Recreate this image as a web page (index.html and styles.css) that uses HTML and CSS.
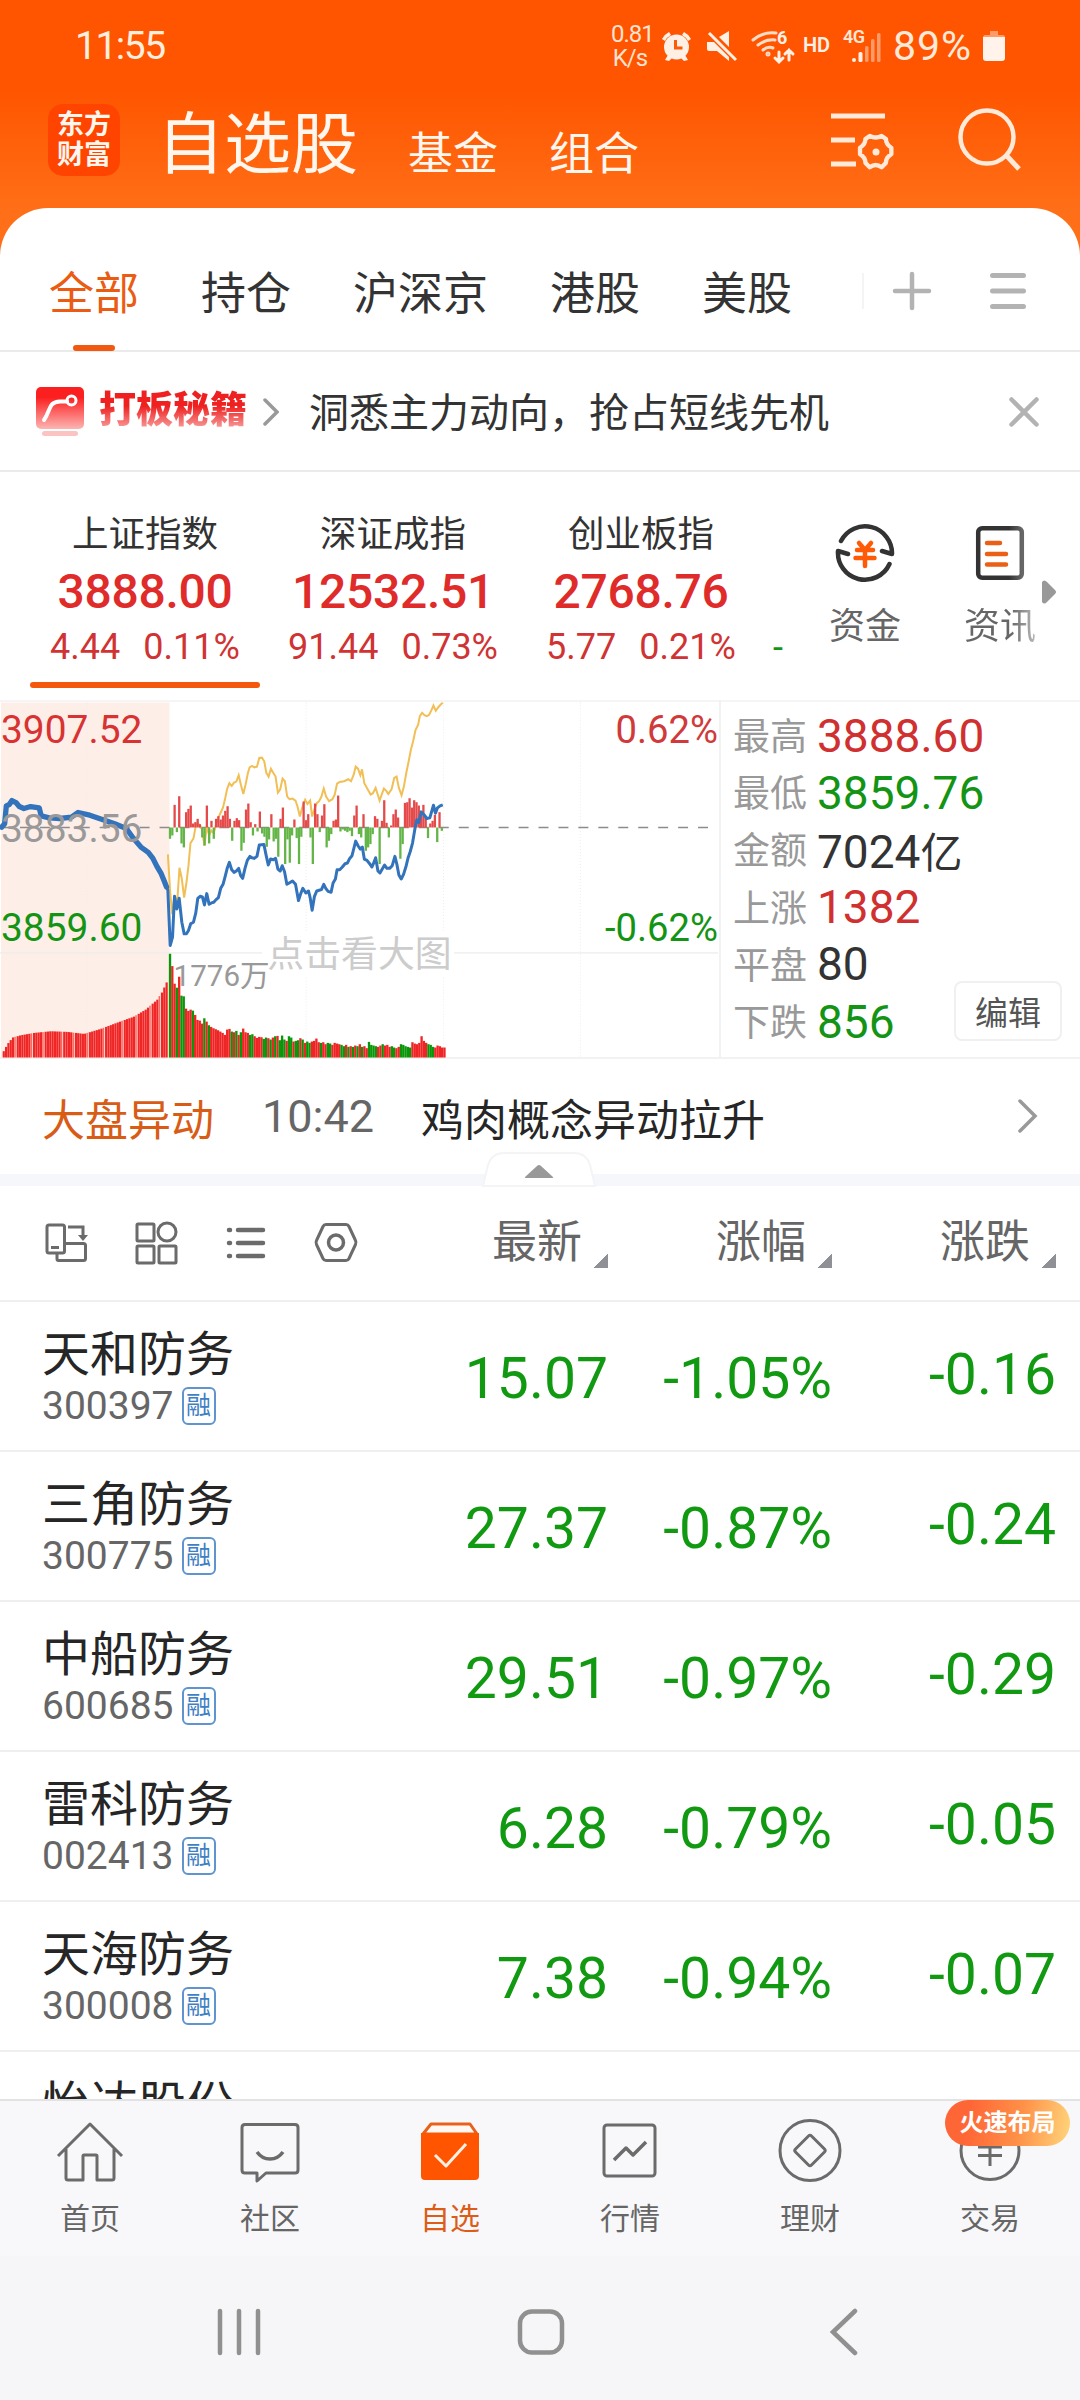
FILE: index.html
```html
<!DOCTYPE html>
<html lang="zh-CN">
<head>
<meta charset="utf-8">
<title>自选股</title>
<link rel="stylesheet" href="styles.css">
</head>
<body>
<div class="phone">
  <header class="top">
    <div class="status">
      <span class="clock">11:55</span>
      <span class="speed">0.81<br>K/s</span>
      <svg class="status-icons" width="232" height="40" viewBox="660 26 232 40">
        <g fill="#fff0e6">
          <circle cx="676.500" cy="47" r="12.500"/>
          <path d="M662 39a16 16 0 0 1 7-7l2 3a14 14 0 0 0-6 6zM691 39a16 16 0 0 0-7-7l-2 3a14 14 0 0 1 6 6zM665 60l3-5 4 3-3 3zM688 60l-3-5-4 3 3 3z"/>
          <path d="M675.500 40v8h7" fill="none" stroke="#ff5a05" stroke-width="3"/>
          <path d="M707 42h7l15 15v4l-12-10h-8q-2 0-2-2zM719 37l10-6v16z"/>
          <path d="M709 33l27 27" stroke="#fff0e6" stroke-width="3"/>
        </g>
        <g fill="none" stroke="#ffdcc6" stroke-width="3" stroke-linecap="round">
          <path d="M753 40q11-9 23-7M758 45q8-6 17-5M763 50q5-4 10-2"/>
          <circle cx="768" cy="54" r="1"/>
          <path d="M779 52v10M775 58l4 4 4-4M789 60v-10M785 54l4-4 4 4" stroke="#fff0e6"/>
        </g>
        <text x="777" y="44" font-size="18" font-weight="700" fill="#fff0e6">6</text>
        <text x="803" y="52" font-size="20" font-weight="600" fill="#fff0e6" textLength="27">HD</text>
        <text x="843" y="43" font-size="18" font-weight="600" fill="#ffe6d6" textLength="22">4G</text>
        <g fill="#fff0e6"><circle cx="854" cy="60" r="2"/><rect x="858.500" y="52" width="4" height="10" rx="1.500"/></g>
        <g fill="#ff9b68"><rect x="865" y="46" width="3.500" height="16" rx="1.500"/><rect x="871" y="39" width="3.500" height="23" rx="1.500"/><rect x="877" y="33" width="3.500" height="29" rx="1.500"/></g>
      </svg>
      <span class="percent">89%</span>
      <svg class="battery" width="22" height="32" viewBox="0 0 22 32"><path d="M7 1h8v4h5q2 0 2 3H0q0-3 2-3h5z" fill="#ff9b68"/><path d="M0 7h22v21q0 3-3 3H3q-3 0-3-3z" fill="#fff3ec"/></svg>
    </div>
    <div class="brand">
      <div class="logo"><span>东方</span><span>财富</span></div>
      <h1 class="title">自选股</h1>
      <span class="sub">基金</span>
      <span class="sub sub-two">组合</span>
      <svg class="manage" width="58" height="60" viewBox="0 0 58 60" fill="none" stroke="#ffe9d9" stroke-width="5">
        <path d="M0 8h54M0 32h24M0 56h25"/>
        <path stroke-linejoin="round" stroke-width="4" d="M40.500 29.500q5.500 3 11 0l4 3q0 5 5 8v6q-5 3-5 8l-4 4q-5.500-4-11 0l-4-4q0-5-5-8v-6q5-3 5-8z" transform="translate(-5 -4) scale(1.080)"/>
        <circle cx="45" cy="44" r="3.500" fill="#ffe9d9" stroke="none"/>
      </svg>
      <svg class="search" width="64" height="66" viewBox="0 0 64 66" fill="none" stroke="#ffe9d9" stroke-width="4.500"><circle cx="29" cy="30" r="26.500"/><path d="M48 48l13 14" stroke-width="5"/></svg>
    </div>
  </header>

  <main class="sheet">
    <nav class="groups">
      <span class="group active">全部</span><span class="group">持仓</span><span class="group">沪深京</span><span class="group">港股</span><span class="group">美股</span>
      <i class="sep"></i>
      <svg class="plus" width="40" height="40" viewBox="0 0 40 40" stroke="#b3b3b3" stroke-width="4.500" stroke-linecap="round"><path d="M3 20h34M20 3v34"/></svg>
      <svg class="menu" width="36" height="40" viewBox="0 0 36 40" stroke="#b3b3b3" stroke-width="5" stroke-linecap="round"><path d="M2.500 4.500h31M2.500 20h31M2.500 35.500h31"/></svg>
    </nav>

    <section class="promo">
      <svg width="48" height="50" viewBox="0 0 48 50">
        <defs><linearGradient id="red" x1="0" y1="0" x2="0" y2="1"><stop offset=".25" stop-color="#fb201f"/><stop offset="1" stop-color="#fcb5b3"/></linearGradient></defs>
        <rect width="48" height="42" rx="5" fill="url(#red)"/>
        <path d="M8 33C15 23 12 15 24 14.500h7" fill="none" stroke="#fff" stroke-width="4" stroke-linecap="round"/><circle cx="35.500" cy="13.500" r="4.500" fill="none" stroke="#fff" stroke-width="3"/>
        <rect x="6" y="44" width="36" height="5" rx="2.500" fill="#fbc3c1"/>
      </svg>
      <b class="promo-tag">打板秘籍</b>
      <svg class="promo-arrow" width="16" height="28" viewBox="0 0 16 28" fill="none" stroke="#999" stroke-width="3.500" stroke-linecap="round"><path d="M2 2l12 12L2 26"/></svg>
      <span class="promo-text">洞悉主力动向，抢占短线先机</span>
      <svg class="close" width="30" height="30" viewBox="0 0 30 30" stroke="#b3b3b3" stroke-width="4.500" stroke-linecap="round"><path d="M2.500 2.500l25 25M27.500 2.500l-25 25"/></svg>
    </section>

    <section class="indices">
      <div class="index current"><span class="iname">上证指数</span><b class="ivalue">3888.00</b><span class="ichange"><i>4.44</i><i>0.11%</i></span></div>
      <div class="index"><span class="iname">深证成指</span><b class="ivalue">12532.51</b><span class="ichange"><i>91.44</i><i>0.73%</i></span></div>
      <div class="index"><span class="iname">创业板指</span><b class="ivalue">2768.76</b><span class="ichange"><i>5.77</i><i>0.21%</i></span></div>
      <span class="next">-</span>
      <div class="tool">
        <svg width="60" height="60" viewBox="0 0 60 60" fill="none" stroke="#333" stroke-width="4.500" stroke-linecap="round" stroke-linejoin="round">
          <path d="M6 18A27 27 0 0 1 57 31L47 28M54.500 41A27 27 0 0 1 3 28L13 31"/>
          <path d="M24 20l6 7 6-7M22 27h16M20.500 35h19M30 27v16" stroke="#ff5a05"/>
        </svg>
        <span>资金</span>
      </div>
      <div class="tool tool-news">
        <svg width="60" height="60" viewBox="0 0 60 60" fill="none" stroke-linecap="round">
          <defs><linearGradient id="fade" x1="0" x2="1" y1="0" y2="0"><stop offset=".7" stop-color="#333"/><stop offset="1" stop-color="#666"/></linearGradient></defs>
          <rect x="8.200" y="5.200" width="43.600" height="49.600" rx="4" stroke="url(#fade)" stroke-width="4.500"/>
          <path d="M17 20h13M17 31h19M17 41.500h19" stroke="#ec5f16" stroke-width="4.500"/>
        </svg>
        <span>资讯</span>
      </div>
      <svg class="more" width="16" height="26" viewBox="0 0 16 26"><path d="M1 3q2-3 5 0l8 8q2 2 0 4l-8 8q-3 3-5 0z" fill="#999"/></svg>
    </section>

    <section class="market">
      <svg class="chart" width="721" height="359" viewBox="0 33 2163 1077" id="chart">
        <rect x="3" y="39" width="507" height="1068" fill="#fdeee8"/>
        <g stroke="#ededed" stroke-width="3" stroke-dasharray="3 6"><path d="M261 39V1107M921 39V1107M1334 39V1107M1746 39V1107"/></g>
        <path d="M0 792H2160" stroke="#ececec" stroke-width="4"/>
        <path d="M0 415H2136" stroke="#8c8c8c" stroke-width="5" stroke-dasharray="30 30"/>
        <g id="volume"></g>
        <path d="M505 496L512 610 518 676 525 620 533 640 540 536 547 570 554 626 561 580 567 530 573 462 582 448 589 410 595 402 602 410 608 422 615 470 622 412 629 438 636 424 643 432 650 406 657 385 664 370 671 355 678 325 683 300 690 282 697 290 704 280 711 277 718 258 725 288 732 314 739 285 746 250 751 234 758 230 765 234 773 232 780 206 788 205 795 216 801 250 808 262 815 238 822 250 829 262 836 310 843 300 850 268 857 276 864 322 871 330 880 328 889 334 895 352 902 382 909 356 918 332 925 344 933 334 939 382 946 360 953 342 960 336 967 322 974 298 981 322 990 336 1000 330 1007 316 1014 283 1022 278 1035 276 1048 270 1056 276 1064 256 1070 232 1077 238 1084 258 1089 240 1096 282 1106 300 1115 316 1122 312 1130 296 1137 318 1142 334 1149 314 1155 298 1162 305 1168 314 1178 300 1186 266 1193 262 1200 296 1208 318 1215 292 1222 252 1229 218 1236 182 1243 155 1250 122 1258 106 1263 80 1270 70 1277 77 1284 80 1291 76 1298 62 1304 48 1311 64 1318 54 1325 46 1332 40" fill="none" stroke="#f1bf55" stroke-width="6"/>
        <g id="flow"></g>
        <path d="M5 414L14 404 19 350 28 346 36 334 48 340 58 352 72 358 92 352 118 356 124 380 148 386 180 388 215 384 235 370 270 378 310 392 345 404 380 418 400 446 424 474 446 490 460 508 472 532 484 552 494 576 501 594" fill="none" stroke="#3273bc" stroke-width="16" stroke-linejoin="round" stroke-linecap="round"/>
        <path d="M501 594L505 604 512 770 519 745 525 622 532 660 539 628 547 700 554 735 561 735 567 725 574 704 582 700 589 672 595 628 602 622 609 624 615 648 622 614 629 646 636 642 643 640 650 632 657 626 664 598 671 586 678 560 684 536 690 520 697 542 704 550 711 546 718 538 724 560 730 568 737 538 744 514 752 502 758 506 765 508 773 502 780 468 787 467 794 466 800 496 807 528 814 510 822 512 829 508 836 540 843 546 849 530 856 548 863 586 870 582 880 576 889 586 898 635 904 616 911 598 920 612 928 606 933 626 939 664 946 622 953 606 960 604 967 602 974 586 980 598 987 607 996 610 1002 582 1009 570 1014 542 1022 542 1030 534 1038 524 1045 522 1052 508 1059 500 1065 476 1070 456 1077 470 1084 480 1090 474 1096 510 1104 514 1112 524 1119 534 1125 520 1130 506 1137 546 1143 552 1150 540 1157 528 1164 538 1172 538 1180 530 1188 502 1194 526 1200 558 1207 570 1214 556 1222 530 1228 505 1234 488 1241 462 1248 420 1254 392 1260 400 1267 368 1275 376 1284 388 1293 386 1300 362 1304 348 1310 372 1316 356 1324 350 1332 347" fill="none" stroke="#3273bc" stroke-width="9" stroke-linejoin="round"/>
        <rect x="788" y="730" width="578" height="134" fill="#fff"/>
        <g font-size="117"><text x="3" y="161" fill="#d93232">3907.52</text><text x="3" y="459" fill="#999">3883.56</text><text x="3" y="758" fill="#149414">3859.60</text></g>
        <g font-size="115" text-anchor="end"><text x="2160" y="161" fill="#d03a3a">0.62%</text><text x="2160" y="758" fill="#149414">-0.62%</text></g>
        <text x="522" y="891" font-size="89" fill="#999">1776万</text>
        <text x="804" y="834" font-size="111" fill="#cccccc">点击看大图</text>
      </svg>
      <dl class="stats">
        <div><dt>最高</dt><dd class="up">3888.60</dd></div>
        <div><dt>最低</dt><dd class="down">3859.76</dd></div>
        <div><dt>金额</dt><dd>7024<small>亿</small></dd></div>
        <div><dt>上涨</dt><dd class="up">1382</dd></div>
        <div><dt>平盘</dt><dd>80</dd></div>
        <div><dt>下跌</dt><dd class="down">856</dd></div>
        <button class="edit">编辑</button>
      </dl>
    </section>

    <section class="alert">
      <span class="alert-tag">大盘异动</span><span class="alert-time">10:42</span><span class="alert-text">鸡肉概念异动拉升</span>
      <svg width="20" height="34" viewBox="0 0 20 34" fill="none" stroke="#999" stroke-width="3.500" stroke-linecap="round"><path d="M2 2l15 15L2 32"/></svg>
      <svg class="fold" width="114" height="36" viewBox="0 0 114 36"><path d="M1 34l4-17Q8 1 22 1h70q14 0 17 16l4 17z" fill="#fff" stroke="#f3f4f6" stroke-width="2"/><path d="M43 25l12-11q2-2 4 0l12 11q1 1-1 1H44q-2 0-1-1z" fill="#999"/></svg>
    </section>

    <section class="head">
      <svg class="views" width="320" height="46" viewBox="42 1220 320 46" fill="none" stroke="#6b6b6b" stroke-width="3">
        <rect x="47" y="1225" width="17.500" height="28" rx="2"/><path d="M51 1247.500h8M68 1227h15v10M57 1253v6q0 1.500 1.500 1.500h25q2 0 2-2v-13q0-2-2-2H65"/><path d="M78 1235l5 6 5-6z" fill="#6b6b6b" stroke="none"/>
        <rect x="137" y="1224" width="17" height="17" rx="1"/><circle cx="167" cy="1232" r="9"/><rect x="137" y="1246" width="17" height="17" rx="1"/><rect x="159" y="1246" width="17" height="17" rx="1"/>
        <path d="M229 1230h1M229 1243h1M229 1256h1M238 1230h25M238 1243h25M238 1256h25" stroke-width="4.500" stroke-linecap="round"/>
        <path d="M326 1224.500h20q2 0 3 2l6.500 14q1 2 0 4l-6.500 14q-1 2-3 2h-20q-2 0-3-2l-6.500-14q-1-2 0-4l6.500-14q1-2 3-2z"/><circle cx="336" cy="1242.500" r="7.500" stroke-width="3.500"/>
      </svg>
      <span class="col">最新<i></i></span><span class="col">涨幅<i></i></span><span class="col">涨跌<i></i></span>
    </section>

    <section class="rows">
      <div class="row"><div class="stock"><b>天和防务</b><span>300397<em>融</em></span></div><span>15.07</span><span>-1.05%</span><span class="diff">-0.16</span></div>
      <div class="row"><div class="stock"><b>三角防务</b><span>300775<em>融</em></span></div><span>27.37</span><span>-0.87%</span><span class="diff">-0.24</span></div>
      <div class="row"><div class="stock"><b>中船防务</b><span>600685<em>融</em></span></div><span>29.51</span><span>-0.97%</span><span class="diff">-0.29</span></div>
      <div class="row"><div class="stock"><b>雷科防务</b><span>002413<em>融</em></span></div><span>6.28</span><span>-0.79%</span><span class="diff">-0.05</span></div>
      <div class="row"><div class="stock"><b>天海防务</b><span>300008<em>融</em></span></div><span>7.38</span><span>-0.94%</span><span class="diff">-0.07</span></div>
      <div class="row"><div class="stock"><b>怡达股份</b></div></div>
    </section>
  </main>

  <nav class="tabs">
    <a><svg width="70" height="66" viewBox="0 0 70 66"><path d="M3 37l32-32 32 32M11 30v29q0 2 2 2h15V37q0-1 1-1h12q1 0 1 1v24h15q2 0 2-2V30"/></svg><span>首页</span></a>
    <a><svg width="70" height="66" viewBox="0 0 70 66"><path d="M10 5.500h50q3 0 3 3V51q0 3-3 3H31l-9 8v-8H10q-3 0-3-3V8.500q0-3 3-3z"/><path d="M22 33q5 7 13 7t13-7" stroke-width="3.500"/></svg><span>社区</span></a>
    <a class="on"><svg width="70" height="66" viewBox="0 0 70 66"><path d="M8 15l8-10h39l7 10z" fill="#fff8f2" stroke="#e8601c"/><path d="M6 14h58v43q0 4-4 4H10q-4 0-4-4z" fill="#ff5500" stroke="none"/><path d="M20 36l11 11 20-22" stroke="#fff0e4"/></svg><span>自选</span></a>
    <a><svg width="70" height="66" viewBox="0 0 70 66"><rect x="9" y="6" width="51" height="51" rx="3"/><path d="M19 41l12-12 7 7 13-13" stroke-width="3.500"/></svg><span>行情</span></a>
    <a><svg width="70" height="66" viewBox="0 0 70 66"><circle cx="35" cy="31.500" r="30"/><path d="M33.500 17q1.500-1.500 3 0l13 13q1.500 1.500 0 3l-13 13q-1.500 1.500-3 0l-13-13q-1.500-1.500 0-3z"/></svg><span>理财</span></a>
    <a><svg width="70" height="66" viewBox="0 0 70 66"><circle cx="35" cy="31.500" r="29"/><path d="M23 28h24M23 36.500h24M35 26v21M27 16l8 10 8-10"/></svg><span>交易</span><em class="badge">火速布局</em></a>
  </nav>
  <footer class="sys">
    <svg width="48" height="48" viewBox="0 0 48 48"><path d="M5 3v42M24 3v42M43 3v42"/></svg>
    <svg width="48" height="48" viewBox="0 0 48 48"><rect x="3" y="3.500" width="42" height="41" rx="12"/></svg>
    <svg width="48" height="48" viewBox="0 0 48 48"><path d="M36 3L14 24l22 21"/></svg>
  </footer>
</div>
<script src="chart.js"></script>
</body>
</html>
```
FILE: styles.css
```css
* { box-sizing: border-box; }
body { margin: 0; background: #fff; font-family: Roboto, "Noto Sans CJK SC", sans-serif; color: #333; }
svg { display: block; flex: none; }
i, em { font-style: normal; }
.phone { width: 1080px; height: 2400px; display: flex; flex-direction: column; overflow: hidden; background: linear-gradient(#ff5500 90px, #ff6f17 210px, #ff6f17 300px); }
.top { height: 208px; flex: none; color: #fff6ee; }
.status { height: 92px; display: flex; align-items: center; padding-left: 75px; color: #ffeede; }
.clock { font-size: 39px; letter-spacing: -1.5px; width: 536px; }
.speed { width: 38px; margin-right: 11px; font-size: 24px; line-height: 24px; text-align: center; letter-spacing: -1px; color: #ffe2cf; }
.percent { font-size: 41px; letter-spacing: 1px; width: 91px; padding-left: 1px; color: #ffe9d9; }
.brand { height: 116px; display: flex; padding-left: 48px; }
.logo { width: 72px; height: 72px; margin-top: 12px; border-radius: 15px; background: #ff4400; display: flex; flex-direction: column; align-items: center; padding-top: 6px; font-size: 27px; font-weight: 700; line-height: 30px; }
.title { margin: 10px 0 0 37px; width: 251px; font-size: 67px; font-weight: 400; line-height: 86px; }
.sub { font-size: 45px; line-height: 60px; margin-top: 33px; width: 141px; }
.sub-two { width: 282px; }
.manage { margin: 16px 6px 0 0; overflow: visible; }
.search { margin: 15px 0 0 63px; }

.sheet { height: 1891px; flex: none; background: #fff; border-radius: 48px 48px 0 0; overflow: hidden; }
.groups { height: 144px; border-bottom: 2px solid #ebebeb; display: flex; align-items: center; padding: 24px 54px 0 49px; }
.group { font-size: 45px; line-height: 120px; padding-top: 4px; height: 120px; margin-right: 62px; position: relative; }
.active { color: #ea5b13; }
.active::after { content: ""; position: absolute; left: 24px; bottom: 0; width: 42px; height: 6px; border-radius: 3px; background: #f0590f; }
.sep { width: 2px; height: 36px; background: #f4f4f4; margin: 0 29px 0 8px; }
.plus { margin-left: -1px; }
.menu { margin-left: 58px; }
.promo { height: 120px; border-bottom: 2px solid #ebebeb; display: flex; align-items: center; padding: 0 41px 0 36px; }
.promo > svg { margin-top: 1px; }
.promo-tag { width: 148px; margin: 0 16px 0 15px; font-size: 37px; line-height: 50px; font-weight: 900; color: transparent; background: linear-gradient(#ee2020 40%, #f9b0ae 92%); -webkit-background-clip: text; background-clip: text; }
.promo-text { font-size: 40px; margin: -3px 0 0 30px; flex: 1; }
.indices { height: 228px; display: flex; padding-left: 21px; position: relative; }
.index { width: 248px; height: 216px; display: flex; flex-direction: column; align-items: center; padding-top: 39px; position: relative; }
.current::after { content: ""; position: absolute; left: 9px; bottom: 0; width: 230px; height: 6px; border-radius: 3px; background: #f4580c; }
.iname { font-size: 36.5px; line-height: 48px; }
.ivalue { font-size: 48px; font-weight: 500; line-height: 65px; letter-spacing: -0.3px; color: #e02b2b; }
.ichange { display: flex; gap: 23px; font-size: 36px; line-height: 46px; color: #d03333; }
.next { font-size: 36px; line-height: 46px; margin: 153px 0 0 8px; width: 47px; color: #149414; }
.tool { width: 90px; display: flex; flex-direction: column; align-items: center; padding-top: 51px; font-size: 36px; line-height: 50px; color: #666; gap: 19px; }
.tool-news { margin-left: 45px; }
.tool-news span { background: linear-gradient(90deg, #666 65%, #bbb); -webkit-background-clip: text; background-clip: text; color: transparent; }
.more { position: absolute; left: 1041px; top: 107px; }
.market { height: 359px; display: flex; border-top: 2px solid #f5f5f5; border-bottom: 2px solid #f2f2f2; }
.chart { margin-top: -2px; border-right: 2px solid #f2f2f2; }
.stats { margin: 0; padding: 5px 0 0 12px; flex: 1; position: relative; }
.stats div { display: flex; align-items: center; height: 57.2px; }
dt { font-size: 37px; color: #999; width: 84px; margin-top: -3px; }
dd { margin: 0; font-size: 46px; }
dd small { font-size: 42px; }
.up { color: #d03030; }
.down { color: #149414; }
.edit { position: absolute; left: 233px; top: 279px; width: 108px; height: 60px; border: 2px solid #f0f0f0; border-radius: 8px; background: #fff; font: 33px Roboto, "Noto Sans CJK SC", sans-serif; color: #555; padding: 0; }
.alert { height: 127px; border-bottom: 12px solid #f5f7fa; display: flex; align-items: center; padding: 0 42px; font-size: 43px; position: relative; }
.alert-tag { color: #d85c16; width: 220px; }
.alert-time { width: 159px; font-size: 45px; color: #666; margin-top: -1px; }
.alert-text { flex: 1; color: #262626; }
.alert > svg { margin-top: -1px; }
.alert .fold { position: absolute; left: 482px; top: 94px; }
.head { height: 114px; display: flex; align-items: center; padding-left: 42px; color: #666; font-size: 45px; }
.views { margin-right: 22px; }
.col { width: 224px; display: flex; justify-content: flex-end; align-items: flex-end; line-height: 52px; }
.col i { width: 15px; height: 15px; margin: 0 0 1px 11px; background: linear-gradient(135deg, transparent 50%, #8f8f96 51%); }
.row { height: 150px; border-top: 2px solid #efefef; display: flex; align-items: center; font-size: 57px; color: #119a11; }
.row > span { width: 224px; text-align: right; padding-top: 4px; }
.row .diff { padding: 0 0 3px; }
.stock { width: 384px; padding-left: 42px; align-self: flex-start; padding-top: 25px; }
.stock b { display: block; font-size: 48px; font-weight: 400; line-height: 55px; color: #262626; }
.stock span { display: flex; align-items: center; font-size: 39px; line-height: 48px; color: #666; }
.stock em { margin-left: 8px; width: 34px; height: 38px; border: 2px solid #5f94cf; border-radius: 6px; font-size: 25px; line-height: 34px; text-align: center; color: #3f7fc4; }

.tabs { height: 157px; flex: none; background: #f8f8fa; border-top: 2px solid #e2e2e4; display: flex; }
.tabs a { width: 180px; display: flex; flex-direction: column; align-items: center; padding-top: 18px; font-size: 30px; line-height: 40px; color: #666; position: relative; }
.tabs svg { fill: none; stroke: #6b6b6b; stroke-width: 3; stroke-linejoin: round; }
.tabs a > span { margin-top: 14px; }
.tabs .on { color: #dc5c18; }
.badge { position: absolute; left: 45px; top: -1px; width: 125px; height: 46px; border-radius: 23px; background: linear-gradient(100deg, #ff6636 20%, #ff9148 60%, #ffd67c); color: #fff; font-size: 24px; font-weight: 700; line-height: 47px; text-align: center; }
.sys { flex: 1; background: #f6f6f8; display: flex; justify-content: space-between; padding: 52px 213px 0 215px; }
.sys svg { fill: none; stroke: #909090; stroke-width: 4.5; stroke-linecap: round; }
```
FILE: chart.js
```javascript
const NS = "http://www.w3.org/2000/svg";
function bar(group, x, y0, y1, color, w) {
  const r = document.createElementNS(NS, "rect");
  r.setAttribute("x", x);
  r.setAttribute("y", Math.min(y0, y1));
  r.setAttribute("width", w);
  r.setAttribute("height", Math.abs(y1 - y0));
  r.setAttribute("fill", color);
  group.appendChild(r);
}
const volume = document.getElementById("volume");
const flow = document.getElementById("flow");

// Opening auction: volume envelope as [x, top]
const auction = [[8, 1088], [20, 1066], [35, 1047], [60, 1040], [100, 1033], [150, 1028], [200, 1030], [250, 1036], [300, 1021], [350, 1002], [400, 984], [435, 963], [470, 933], [485, 910], [496, 885], [508, 862]];
const gaps = [5, 12, 17, 25, 30, 36, 43, 51, 57, 63, 67];
for (let i = 0, x = 8; x < 502; x += 7, i++) {
  let k = 0;
  while (k < auction.length - 2 && auction[k + 1][0] < x) k++;
  const [a, b] = [auction[k], auction[k + 1]];
  const top = a[1] + (b[1] - a[1]) * (x - a[0]) / (b[0] - a[0]);
  bar(volume, x, 1107, top, gaps.includes(i) ? "#f8685f" : "#f02626", gaps.includes(i) ? 4.5 : 6.6);
}
// Continuous trading: bar height per minute, g = falling, r = rising
const minutes = "312g 275r 222r 210g 243r 186g 184g 147r 140r 144r 141g 128r 113r 111r 102r 118g 108r 97g 92r 88r 85r 82r 78r 74r 68r 84r 86r 78g 76r 80g 68r 76g 87r 76r 74r 68g 70g 64r 59r 62r 61r 56g 60g 58r 54g 60r 64g 65r 52g 66g 54g 50r 64g 60g 48r 50g 52g 58r 54g 44r 48g 44g 48r 50r 57r 46r 44g 46r 40r 44g 42g 38r 44r 42r 40r 38g 34g 38r 32g 34r 32g 36r 34g 40r 32g 34r 28r 47g 38g 36g 34g 32r 36r 40g 36r 38r 32r 34g 30g 28r 32r 40g 38g 34g 32g 30g 46r 42r 40r 44r 64r 50r 44r 40g 38g 32g 30r 36r 34r 30r 30r".split(" ");
minutes.forEach((m, i) => bar(volume, 508 + i * 6.88, 1107, 1107 - parseInt(m), m.endsWith("g") ? "#0a960a" : "#ee2525", 7));

// Capital flow around the previous close, positive above the line
const flows = [-34, -24, 68, -14, 94, -48, -60, 46, 56, 66, 12, 16, 26, 10, -30, -54, 66, -48, 20, -34, 26, 34, 24, 36, 50, 64, 26, -40, 20, 28, 22, -70, -46, 54, 72, 16, -24, 10, -12, 48, -18, -28, -58, -36, 40, -42, -34, -88, 26, 60, -110, -36, -106, -24, 24, -32, -110, -28, 78, 22, 40, -30, -110, 72, 40, -14, 36, 70, -60, -40, -20, 20, 24, 96, -12, -6, -10, -14, -10, -26, 36, 66, -20, -30, 40, -70, -60, -50, -20, 34, 26, -110, 20, 82, 14, -30, 6, 40, 54, 30, -94, -50, 74, 76, 88, 60, 82, 76, 66, 40, 68, 30, -32, 12, 20, 38, -44, 46, -10];
flows.forEach((v, i) => bar(flow, 508 + i * 6.93, 415, 415 - v, v > 0 ? "#e54a4a" : "#62b546", 6.9));
```
